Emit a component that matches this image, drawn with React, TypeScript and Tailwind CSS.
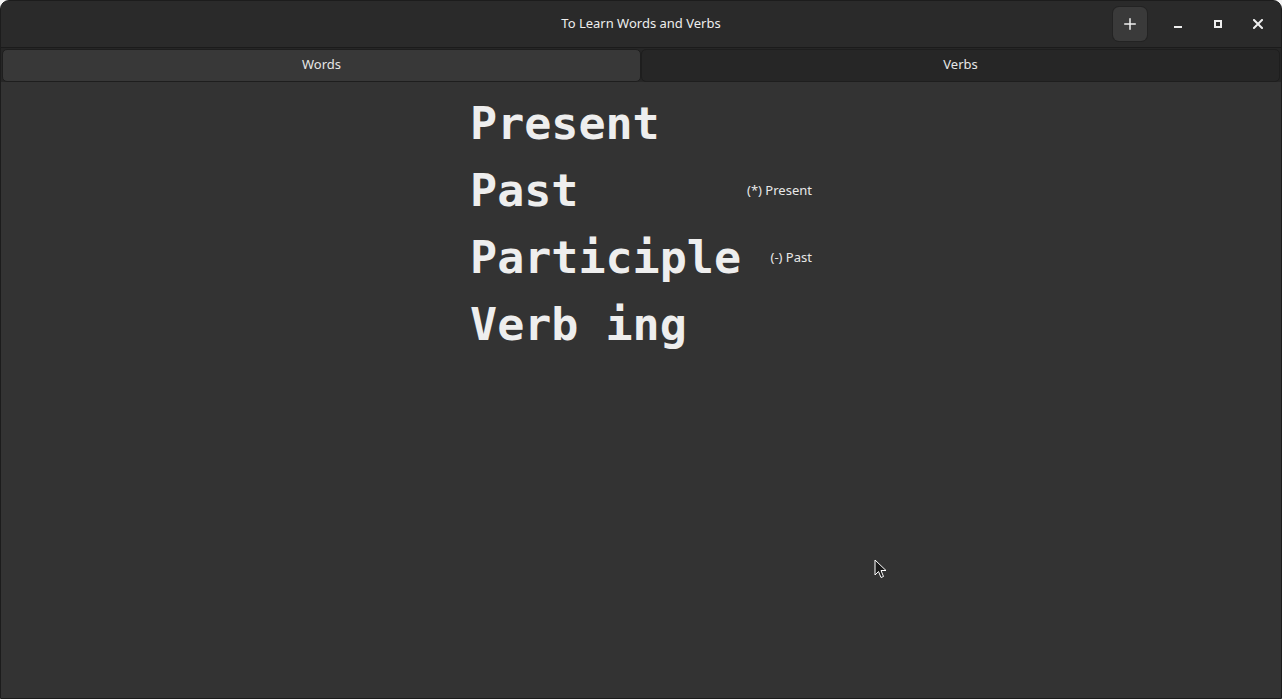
import { Plus } from "lucide-react";

const rows = [
  { word: "Present", note: "" },
  { word: "Past", note: "(*) Present" },
  { word: "Participle", note: "(-) Past" },
  { word: "Verb ing", note: "" },
];

function WindowControls() {
  return (
    <div className="flex items-center">
      <button className="flex h-[34px] w-[34px] items-center justify-center rounded-[6px] bg-[#3a3a3a] text-[#f0f0f0] shadow-[0_0_0_1px_#232323]">
        <Plus className="h-[18px] w-[18px]" strokeWidth={2} />
      </button>
      <div className="ml-[19px] flex h-[24px] w-[24px] items-center justify-center">
        <span className="mt-[6px] block h-[2px] w-[8px] bg-[#eeeeee]" />
      </div>
      <div className="ml-[16px] flex h-[24px] w-[24px] items-center justify-center">
        <span className="block h-[8px] w-[8px] border-2 border-[#eeeeee]" />
      </div>
      <div className="ml-[16px] flex h-[24px] w-[24px] items-center justify-center">
        <svg width="10" height="10" viewBox="0 0 10 10">
          <path d="M1 1 L9 9 M9 1 L1 9" stroke="#eeeeee" strokeWidth="2" strokeLinecap="square" />
        </svg>
      </div>
    </div>
  );
}

function Cursor() {
  return (
    <svg className="absolute left-[873px] top-[558px]" width="14" height="21" viewBox="0 0 14 21">
      <path
        d="M1 1 L1 16 L4.5 12.5 L7 18.5 L9.5 17.5 L7 11.5 L12 11.5 Z"
        fill="#1a1a1a"
        stroke="#ffffff"
        strokeWidth="1"
        strokeLinejoin="miter"
      />
    </svg>
  );
}

export default function App() {
  return (
    <div className="h-[699px] w-[1282px] overflow-hidden bg-[#f4f4f4]">
      <div className="relative flex h-full w-full flex-col overflow-hidden rounded-t-[9px] border border-[#1c1c1c] bg-[#333333] font-['Noto_Sans',sans-serif] text-[#eeeeee]">
        <header className="relative flex h-[47px] shrink-0 items-center justify-end border-b border-[#1b1b1b] bg-[#2a2a2a] pr-[11px]">
          <h1 className="absolute inset-x-0 top-0 text-center text-[13px] leading-[44px]">To Learn Words and Verbs</h1>
          <div className="relative">
            <WindowControls />
          </div>
        </header>

        <nav className="flex h-[34px] shrink-0 bg-[#262626] px-[1px] pt-[1px]">
          <button className="flex-1 rounded-[5px] border border-[#1e1e1e] bg-[#383838] pb-[2px] text-[13px] text-[#e6e6e6]">
            Words
          </button>
          <button className="flex-1 rounded-[5px] border border-[#1e1e1e] bg-[#262626] pb-[2px] text-[13px] text-[#e6e6e6]">
            Verbs
          </button>
        </nav>

        <main className="flex-1 pt-[8px]">
          <div className="mx-auto grid w-fit grid-cols-[auto_auto] gap-x-[6px]">
            {rows.map((row) => (
              <div key={row.word} className="contents">
                <span className="font-['DejaVu_Sans_Mono',monospace] text-[45px] font-bold leading-[67px] text-[#eeeeee]">
                  {row.word}
                </span>
                <span className="self-center justify-self-end text-[13px] text-[#e8e8e8]">{row.note}</span>
              </div>
            ))}
          </div>
        </main>

        <Cursor />
      </div>
    </div>
  );
}
